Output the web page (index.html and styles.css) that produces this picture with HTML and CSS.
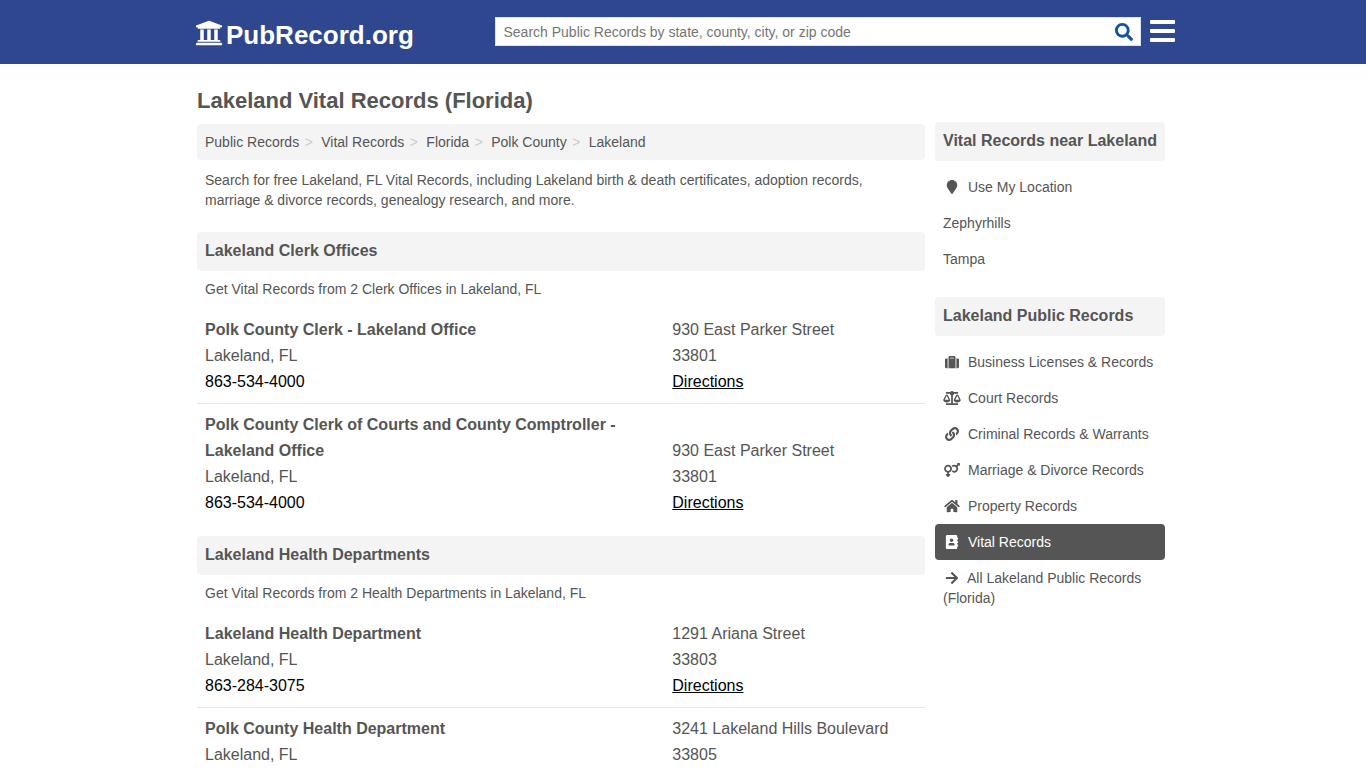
FILE: index.html
```html
<!DOCTYPE html>
<html lang="en">
<head>
    <meta charset="UTF-8">
    <meta name="viewport" content="width=device-width, initial-scale=1.0">
    <title>Lakeland Vital Records (Florida)</title>
    <link rel="stylesheet" href="styles.css">
</head>
<body>
    <header class="header">
        <div class="header-inner">
            <a class="logo" href="#">
                <svg class="logo-icon" viewBox="0 0 512 512"><path d="M496 128v16a8 8 0 0 1-8 8h-24v12c0 6.627-5.373 12-12 12H60c-6.627 0-12-5.373-12-12v-12H24a8 8 0 0 1-8-8v-16a8 8 0 0 1 4.941-7.392l232-88a7.996 7.996 0 0 1 6.118 0l232 88A8 8 0 0 1 496 128zm-24 304H40c-13.255 0-24 10.745-24 24v16a8 8 0 0 0 8 8h464a8 8 0 0 0 8-8v-16c0-13.255-10.745-24-24-24zM96 192v192H60c-6.627 0-12 5.373-12 12v20h416v-20c0-6.627-5.373-12-12-12h-36V192h-64v192h-64V192h-64v192h-64V192H96z"/></svg>
                <span>PubRecord.org</span>
            </a>
            <form class="search">
                <input type="text" class="search-input" placeholder="Search Public Records by state, county, city, or zip code">
                <button type="button" class="search-btn" aria-label="Search">
                    <svg viewBox="0 0 512 512"><path d="M505 442.7L405.3 343c-4.5-4.5-10.6-7-17-7H372c27.6-35.3 44-79.7 44-128C416 93.1 322.9 0 208 0S0 93.1 0 208s93.1 208 208 208c48.3 0 92.7-16.4 128-44v16.3c0 6.4 2.5 12.5 7 17l99.7 99.7c9.4 9.4 24.6 9.4 33.9 0l28.3-28.3c9.4-9.4 9.4-24.6.1-34zM208 336c-70.7 0-128-57.2-128-128 0-70.7 57.2-128 128-128 70.7 0 128 57.2 128 128 0 70.7-57.2 128-128 128z"/></svg>
                </button>
            </form>
            <div class="menu-btn"><span></span><span></span><span></span></div>
        </div>
    </header>

    <div class="container">
        <main class="main">
            <h1>Lakeland Vital Records (Florida)</h1>
            <ol class="breadcrumb">
                <li><a href="#">Public Records</a></li>
                <li><a href="#">Vital Records</a></li>
                <li><a href="#">Florida</a></li>
                <li><a href="#">Polk County</a></li>
                <li><a href="#">Lakeland</a></li>
            </ol>
            <p class="intro">Search for free Lakeland, FL Vital Records, including Lakeland birth &amp; death certificates, adoption records, marriage &amp; divorce records, genealogy research, and more.</p>

            <!-- Clerk Offices -->
            <section class="section">
                <h2>Lakeland Clerk Offices</h2>
                <p>Get Vital Records from 2 Clerk Offices in Lakeland, FL</p>
                <div class="office">
                    <div>
                        <strong>Polk County Clerk - Lakeland Office</strong>
                        <div>Lakeland, FL</div>
                        <a href="#">863-534-4000</a>
                    </div>
                    <div>
                        <div>930 East Parker Street</div>
                        <div>33801</div>
                        <a class="directions" href="#">Directions</a>
                    </div>
                </div>
                <div class="office">
                    <div>
                        <strong>Polk County Clerk of Courts and County Comptroller - Lakeland Office</strong>
                        <div>Lakeland, FL</div>
                        <a href="#">863-534-4000</a>
                    </div>
                    <div>
                        <div>930 East Parker Street</div>
                        <div>33801</div>
                        <a class="directions" href="#">Directions</a>
                    </div>
                </div>
            </section>

            <!-- Health Departments -->
            <section class="section">
                <h2>Lakeland Health Departments</h2>
                <p>Get Vital Records from 2 Health Departments in Lakeland, FL</p>
                <div class="office">
                    <div>
                        <strong>Lakeland Health Department</strong>
                        <div>Lakeland, FL</div>
                        <a href="#">863-284-3075</a>
                    </div>
                    <div>
                        <div>1291 Ariana Street</div>
                        <div>33803</div>
                        <a class="directions" href="#">Directions</a>
                    </div>
                </div>
                <div class="office">
                    <div>
                        <strong>Polk County Health Department</strong>
                        <div>Lakeland, FL</div>
                    </div>
                    <div>
                        <div>3241 Lakeland Hills Boulevard</div>
                        <div>33805</div>
                    </div>
                </div>
            </section>
        </main>

        <aside class="sidebar">
            <section class="section">
                <h2>Vital Records near Lakeland</h2>
                <ul class="side-list">
                    <li><a href="#"><svg class="icon" viewBox="0 0 384 512"><path d="M172.268 501.67C26.97 291.031 0 269.413 0 192 0 85.961 85.961 0 192 0s192 85.961 192 192c0 77.413-26.97 99.031-172.268 309.67-9.535 13.774-29.93 13.773-39.464 0z"/></svg>Use My Location</a></li>
                    <li><a href="#">Zephyrhills</a></li>
                    <li><a href="#">Tampa</a></li>
                </ul>
            </section>
            <section class="section">
                <h2>Lakeland Public Records</h2>
                <ul class="side-list">
                    <li><a href="#"><svg class="icon" viewBox="0 0 512 512"><path d="M128 480h256V80c0-26.5-21.5-48-48-48H176c-26.5 0-48 21.5-48 48v400zm64-384h128v32H192V96zm320 80v256c0 26.5-21.5 48-48 48h-48V128h48c26.5 0 48 21.5 48 48zM96 480H48c-26.5 0-48-21.5-48-48V176c0-26.5 21.5-48 48-48h48v352z"/></svg>Business Licenses &amp; Records</a></li>
                    <li><a href="#"><svg class="icon" viewBox="0 0 640 512"><path d="M256 336h-.02c0-16.18 1.34-8.73-85.05-181.51-17.65-35.29-68.19-35.36-85.87 0C-2.06 328.75.02 320.33.02 336H0c0 44.18 57.31 80 128 80s128-35.82 128-80zM128 176l72 144H56l72-144zm511.98 160c0-16.18 1.34-8.73-85.05-181.51-17.65-35.29-68.19-35.36-85.87 0-87.12 174.26-85.04 165.84-85.04 181.51H384c0 44.18 57.31 80 128 80s128-35.82 128-80h-.02zM440 320l72-144 72 144H440zm88 128H352V153.25c23.51-10.29 41.16-31.48 46.39-57.25H528c8.84 0 16-7.16 16-16V48c0-8.84-7.16-16-16-16H383.64C369.04 12.68 346.09 0 320 0s-49.04 12.68-63.64 32H112c-8.84 0-16 7.16-16 16v32c0 8.84 7.16 16 16 16h129.61c5.23 25.76 22.87 46.96 46.39 57.25V448H112c-8.84 0-16 7.16-16 16v32c0 8.84 7.16 16 16 16h416c8.84 0 16-7.16 16-16v-32c0-8.84-7.16-16-16-16z"/></svg>Court Records</a></li>
                    <li><a href="#"><svg class="icon" viewBox="0 0 512 512"><path d="M326.612 185.391c59.747 59.809 58.927 155.698.36 214.59-.11.12-.24.25-.36.37l-67.2 67.2c-59.27 59.27-155.699 59.262-214.96 0-59.27-59.26-59.27-155.7 0-214.96l37.106-37.106c9.84-9.84 26.786-3.3 27.294 10.606.648 17.722 3.826 35.527 9.69 52.721 1.986 5.822.567 12.262-3.783 16.612l-13.087 13.087c-28.026 28.026-28.905 73.66-1.155 101.96 28.024 28.579 74.086 28.749 102.325.51l67.2-67.19c28.191-28.191 28.073-73.757 0-101.83-3.701-3.694-7.429-6.564-10.341-8.569a16.037 16.037 0 0 1-6.947-12.606c-.396-10.567 3.348-21.456 11.698-29.806l21.054-21.055c5.521-5.521 14.182-6.199 20.584-1.731a152.482 152.482 0 0 1 20.522 17.197zM467.547 44.449c-59.261-59.262-155.69-59.27-214.96 0l-67.2 67.2c-.12.12-.25.25-.36.37-58.566 58.892-59.387 154.781.36 214.59a152.454 152.454 0 0 0 20.521 17.196c6.402 4.468 15.064 3.789 20.584-1.731l21.054-21.055c8.35-8.35 12.094-19.239 11.698-29.806a16.037 16.037 0 0 0-6.947-12.606c-2.912-2.005-6.64-4.875-10.341-8.569-28.073-28.073-28.191-73.639 0-101.83l67.2-67.19c28.239-28.239 74.3-28.069 102.325.51 27.75 28.3 26.872 73.934-1.155 101.96l-13.087 13.087c-4.35 4.35-5.769 10.79-3.783 16.612 5.864 17.194 9.042 34.999 9.69 52.721.509 13.906 17.454 20.446 27.294 10.606l37.106-37.106c59.271-59.259 59.271-155.699.001-214.959z"/></svg>Criminal Records &amp; Warrants</a></li>
                    <li><a href="#"><svg class="icon" viewBox="0 0 576 512"><path d="M564 0h-79c-10.7 0-16 12.9-8.5 20.5l16.9 16.9-48.7 48.7C422.5 72.1 396.2 64 368 64c-33.7 0-64.6 11.6-89.2 30.9 14 16.7 25 36 32.1 57.1 14.5-14.8 34.7-24 57.1-24 44.1 0 80 35.9 80 80s-35.9 80-80 80c-22.3 0-42.6-9.2-57.1-24-7.1 21.1-18 40.4-32.1 57.1 24.5 19.4 55.5 30.9 89.2 30.9 79.5 0 144-64.5 144-144 0-28.2-8.1-54.5-22.1-76.7l48.7-48.7 16.9 16.9c2.4 2.4 5.4 3.5 8.4 3.5 6.2 0 12.1-4.8 12.1-12V12c0-6.6-5.4-12-12-12zM144 64C64.5 64 0 128.5 0 208c0 68.5 47.9 125.9 112 140.4V400H76c-6.6 0-12 5.4-12 12v40c0 6.6 5.4 12 12 12h36v36c0 6.6 5.4 12 12 12h40c6.6 0 12-5.4 12-12v-36h36c6.6 0 12-5.4 12-12v-40c0-6.6-5.4-12-12-12h-36v-51.6c64.1-14.6 112-71.9 112-140.4 0-79.5-64.5-144-144-144zm0 224c-44.1 0-80-35.9-80-80s35.9-80 80-80 80 35.9 80 80-35.9 80-80 80z"/></svg>Marriage &amp; Divorce Records</a></li>
                    <li><a href="#"><svg class="icon" viewBox="0 0 576 512"><path d="M280.37 148.26L96 300.11V464a16 16 0 0 0 16 16l112.06-.29a16 16 0 0 0 15.92-16V368a16 16 0 0 1 16-16h64a16 16 0 0 1 16 16v95.64a16 16 0 0 0 16 16.05L464 480a16 16 0 0 0 16-16V300L295.67 148.26a12.19 12.19 0 0 0-15.3 0zM571.6 251.47L488 182.56V44.05a12 12 0 0 0-12-12h-56a12 12 0 0 0-12 12v72.61L318.47 43a48 48 0 0 0-61 0L4.34 251.47a12 12 0 0 0-1.6 16.9l25.5 31A12 12 0 0 0 45.15 301l235.22-193.74a12.19 12.19 0 0 1 15.3 0L530.9 301a12 12 0 0 0 16.9-1.6l25.5-31a12 12 0 0 0-1.7-16.93z"/></svg>Property Records</a></li>
                    <li><a class="active" href="#"><svg class="icon" viewBox="0 0 448 512"><path d="M436 160c6.6 0 12-5.4 12-12v-40c0-6.6-5.4-12-12-12h-20V48c0-26.5-21.5-48-48-48H48C21.5 0 0 21.5 0 48v416c0 26.5 21.5 48 48 48h320c26.5 0 48-21.5 48-48v-48h20c6.6 0 12-5.4 12-12v-40c0-6.6-5.4-12-12-12h-20v-64h20c6.6 0 12-5.4 12-12v-40c0-6.6-5.4-12-12-12h-20v-64h20zm-228-32c35.3 0 64 28.7 64 64s-28.7 64-64 64-64-28.7-64-64 28.7-64 64-64zm112 236.8c0 10.6-10 19.2-22.4 19.2H118.4C106 384 96 375.4 96 364.8v-19.2c0-31.8 30.1-57.6 67.2-57.6h5c12.3 5.1 25.7 8 39.8 8s27.6-2.9 39.8-8h5c37.1 0 67.2 25.8 67.2 57.6v19.2z"/></svg>Vital Records</a></li>
                    <li><a class="all" href="#"><svg class="icon" viewBox="0 0 448 512"><path d="M190.5 66.9l22.2-22.2c9.4-9.4 24.6-9.4 33.9 0L441 239c9.4 9.4 9.4 24.6 0 33.9L246.6 467.3c-9.4 9.4-24.6 9.4-33.9 0l-22.2-22.2c-9.5-9.5-9.3-25 .4-34.3L311.4 296H24c-13.3 0-24-10.7-24-24v-32c0-13.3 10.7-24 24-24h287.4L190.9 101.2c-9.8-9.3-10-24.8-.4-34.3z"/></svg>All Lakeland Public Records (Florida)</a></li>
                </ul>
            </section>
        </aside>
    </div>
</body>
</html>
```
FILE: styles.css
```css
* { margin: 0; padding: 0; box-sizing: border-box; }
html {
    overflow: hidden;
}
body {
    height: 768px;
    overflow: hidden;
    font-family: "Liberation Sans", Arial, sans-serif;
    font-size: 14px;
    line-height: 20px;
    color: #555;
    background-color: #fff;
}
a {
    color: #555;
    text-decoration: none;
}
ul, ol {
    list-style: none;
}

/* Header */
.header {
    height: 64px;
    background-color: #2e478e;
}
.header-inner {
    display: flex;
    align-items: flex-start;
    width: 984px;
    margin: 0 auto;
    padding-left: 4px;
}
.logo {
    display: flex;
    align-items: center;
    width: 300px;
    padding-top: 20px;
    font-size: 26px;
    font-weight: bold;
    line-height: 30px;
    color: #fff;
}
.logo-icon {
    width: 28px;
    height: 28px;
    margin: -4px 3px 0 0;
    fill: #fff;
}
.search {
    display: flex;
    width: 646px;
    height: 29px;
    margin-top: 17px;
    background-color: #fff;
    border: 1px solid #dbe4f2;
}
.search-input {
    flex: 1;
    padding: 0 7.5px;
    border: none;
    outline: none;
    background: none;
    font-family: inherit;
    font-size: 14px;
}
.search-input::placeholder {
    color: #757575;
}
.search-btn {
    width: 32px;
    padding: 5px 7px;
    border: none;
    background: none;
    cursor: pointer;
}
.search-btn svg {
    display: block;
    width: 18px;
    height: 18px;
    fill: #0f549c;
}
.menu-btn {
    display: flex;
    flex-direction: column;
    gap: 5px;
    width: 25px;
    margin: 20px 0 0 9px;
}
.menu-btn span {
    height: 4px;
    background-color: #fff;
    border-radius: 1px;
}

/* Page columns */
.container {
    display: flex;
    gap: 10px;
    width: 972px;
    margin: 0 auto;
}
.main {
    width: 728px;
}
.sidebar {
    width: 230px;
    padding-top: 58px;
}
h1 {
    padding: 22px 0 8px;
    font-size: 22px;
    line-height: 30px;
}
.breadcrumb {
    display: flex;
    padding: 8px;
    background-color: #f4f4f4;
    border-radius: 4px;
}
.breadcrumb li + li::before {
    content: ">";
    padding: 0 8.4px 0 5.5px;
    color: #ccc;
}
.intro {
    padding: 10px 8px 22px;
}

/* Sections */
.section h2 {
    padding: 9px 8px 10px;
    font-size: 16px;
    line-height: 20px;
    background-color: #f4f4f4;
    border-radius: 4px;
}
.main .section {
    margin-bottom: 12px;
}
.section p {
    padding: 8px 8px 10px;
}
.office {
    display: flex;
    align-items: flex-end;
    padding: 8px;
    font-size: 16px;
    line-height: 26px;
    border-bottom: 1px solid #e8e8e8;
}
.office:last-child {
    border-bottom: none;
}
.office > div:first-child {
    width: 467.3px;
    padding-right: 40px;
}
.office a {
    display: block;
    color: #000;
}
.office .directions {
    text-decoration: underline;
}

/* Sidebar */
.side-list {
    padding: 8px 0 20px;
}
.side-list a {
    display: block;
    padding: 8px;
    border-radius: 4px;
}
.side-list .active {
    color: #fff;
    background-color: #555;
}
.icon {
    width: 18px;
    height: 14px;
    margin-right: 7px;
    vertical-align: -2px;
    fill: currentColor;
}
.all .icon {
    margin-right: 6px;
}
```
